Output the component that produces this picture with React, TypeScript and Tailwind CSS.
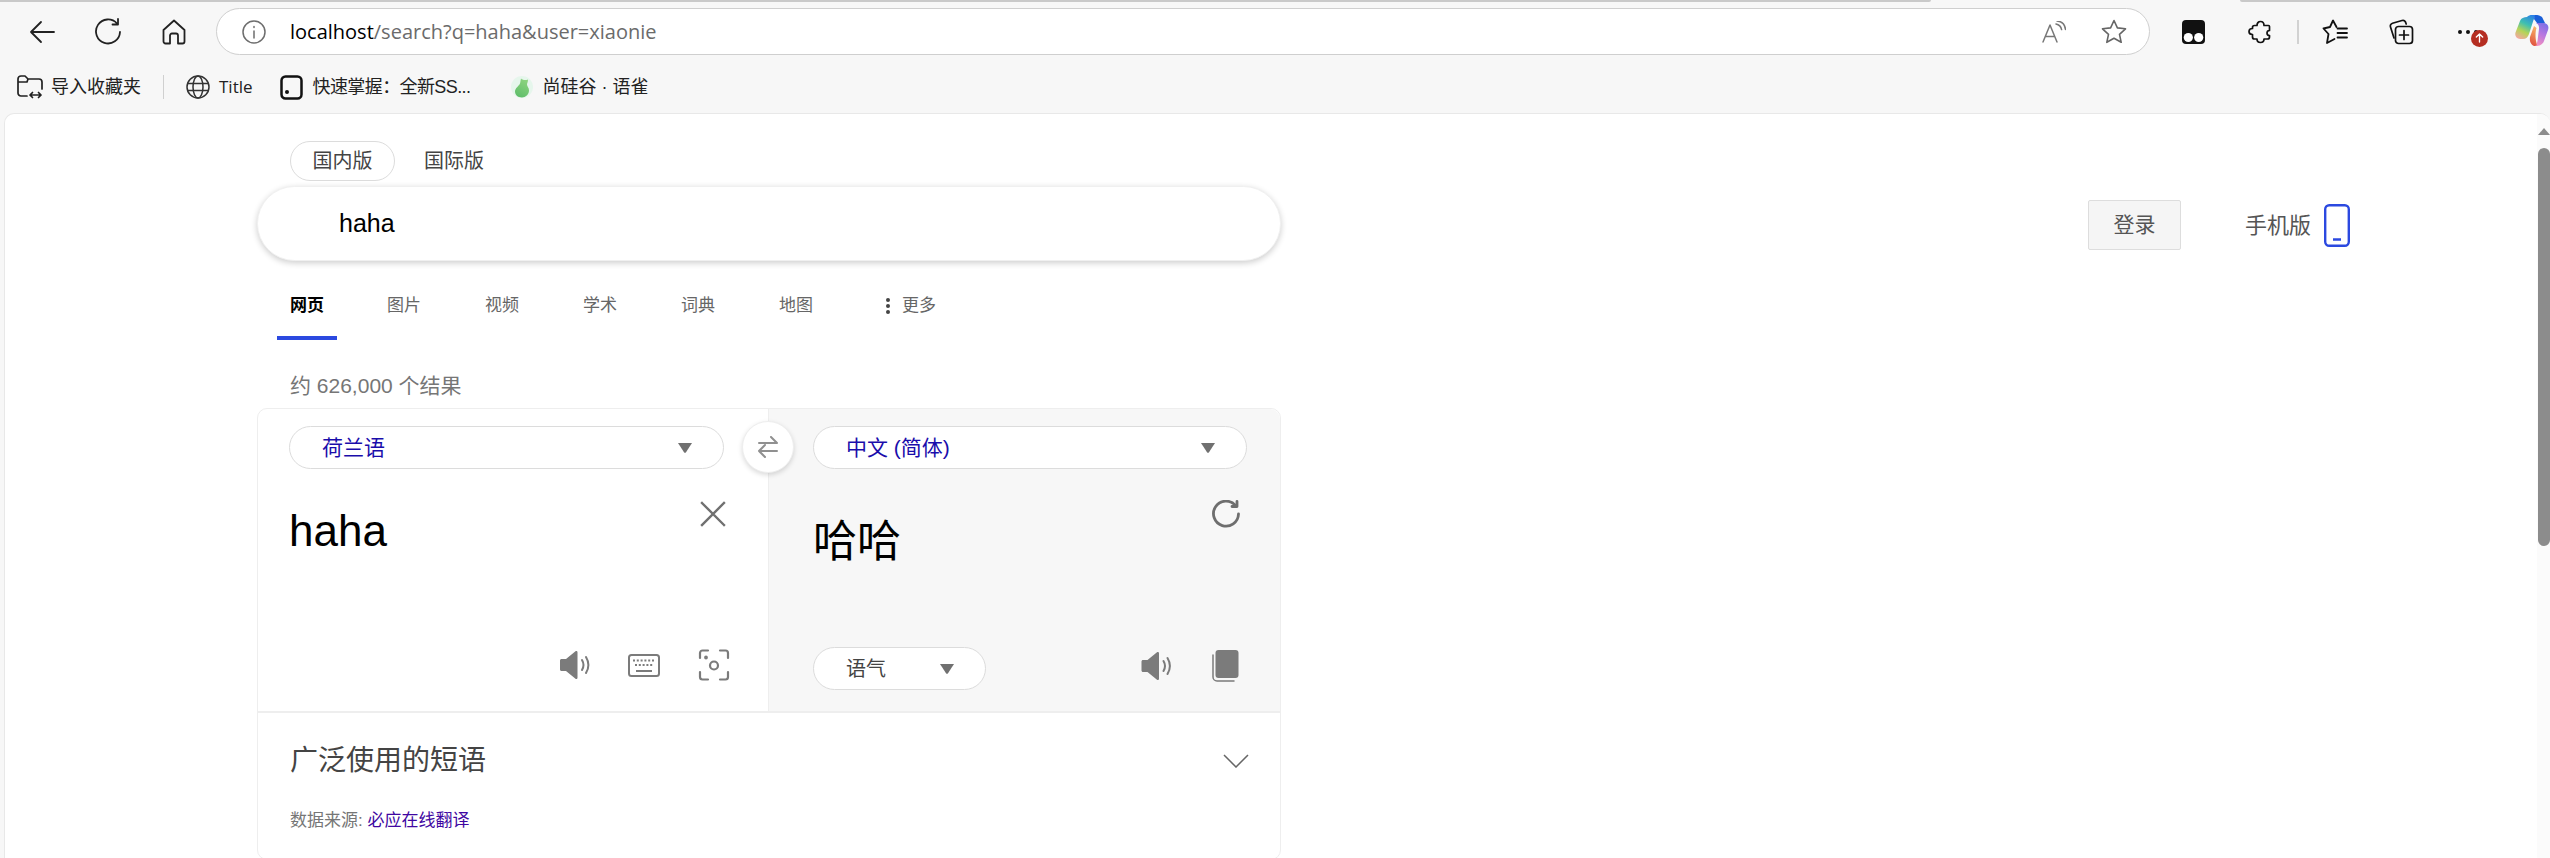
const cjk = "font-['Liberation_Sans','Noto_Sans_CJK_SC',sans-serif]"

const Speaker = ({ className }: { className: string }) => (
  <svg viewBox="0 0 32 30" className={className} fill="none">
    <path d="M1 10.500c0-.8.7-1.500 1.500-1.500H7L16.500 1.200c.8-.6 2-.1 2 1v25.600c0 1.100-1.200 1.600-2 1L7 21H2.500C1.700 21 1 20.300 1 19.500z" fill="#7b7b7b" />
    <path d="M23 10c1.800 3 1.800 7 0 10M27 7c3 5 3 11 0 16" stroke="#7b7b7b" strokeWidth="2" strokeLinecap="round" />
  </svg>
)

const Caret = () => (
  <svg viewBox="0 0 14 10" className="w-[14px] h-[10px]">
    <path d="M0 0h14L8 9.200c-.5.700-1.500.700-2 0z" fill="#707070" />
  </svg>
)

const LangSelect = ({ label, className }: { label: string; className: string }) => (
  <div className={`flex items-center justify-between h-[43px] pl-[32px] pr-[31px] bg-white border border-[#dcdcdc] rounded-full ${className}`}>
    <span className="text-[21px] text-[#1a0dab]">{label}</span>
    <Caret />
  </div>
)

const tabs = ['图片', '视频', '学术', '词典', '地图']

const App = () => {
  return (
    <div className={`w-[2550px] h-[858px] overflow-hidden flex flex-col bg-[#f7f7f7] ${cjk}`}>
      {/* tab strip leftovers */}
      <div className="flex justify-between h-[2px] shrink-0">
        <div className="w-[1931px] bg-[#c9c9c9] rounded-br" />
        <div className="w-[310px] bg-[#c9c9c9] rounded-bl" />
      </div>

      {/* toolbar */}
      <div className="flex items-center h-[53px] mt-[3px] shrink-0">
        <svg viewBox="0 0 26 24" className="w-[26px] h-[24px] ml-[29px]" fill="none" stroke="#222" strokeWidth="1.800" strokeLinecap="round" strokeLinejoin="round">
          <path d="M25 12H2M12 2 2 12l10 10" />
        </svg>
        <svg viewBox="0 0 26 28" className="w-[26px] h-[28px] ml-[40px]" fill="none" stroke="#222" strokeWidth="1.800" strokeLinecap="round" strokeLinejoin="round">
          <path d="M22 5.500A12 12 0 1 0 25 14M23 1v5.500h-5.500" />
        </svg>
        <svg viewBox="0 0 24 26" className="w-[24px] h-[26px] ml-[41px]" fill="none" stroke="#222" strokeWidth="1.800" strokeLinejoin="round">
          <path d="M1.500 11 12 1.500 22.500 11v11.500a2 2 0 0 1-2 2H16v-8a2 2 0 0 0-2-2h-4a2 2 0 0 0-2 2v8H3.500a2 2 0 0 1-2-2z" />
        </svg>
        <div className="flex items-center w-[1934px] h-[47px] ml-[30px] bg-white border border-[#cfcfcf] rounded-full">
          <svg viewBox="0 0 24 24" className="w-[24px] h-[24px] ml-[25px]" fill="none" stroke="#6e6e6e" strokeWidth="1.500" strokeLinecap="round">
            <circle cx="12" cy="12" r="11" />
            <path d="M12 11v7M12 6.500v1" />
          </svg>
          <span className="ml-[24px] text-[20px] font-['Open_Sans',sans-serif]">
            <span className="text-black">localhost</span>
            <span className="text-[#6b6b6b]">/search?q=haha&amp;user=xiaonie</span>
          </span>
          <svg viewBox="0 0 24 22" className="w-[24px] h-[22px] ml-auto" fill="none" stroke="#777" strokeWidth="1.500" strokeLinecap="round" strokeLinejoin="round">
            <path d="M1 21 8 4l7 17M3.500 15.500h9M14 3c3 .6 5 2.600 5.600 5.600M15 0c5 .5 8 3.500 8.500 8.500" />
          </svg>
          <svg viewBox="0 0 26 25" className="w-[26px] h-[25px] ml-[35px] mr-[22px]" fill="none" stroke="#666" strokeWidth="1.600" strokeLinejoin="round">
            <path d="m13 1.500 3.400 7.400 8.100.9-6 5.500 1.700 8-7.200-4.100-7.200 4.100 1.700-8-6-5.500 8.100-.9z" />
          </svg>
        </div>
        {/* tampermonkey */}
        <svg viewBox="0 0 23 24" className="w-[23px] h-[24px] ml-[32px]">
          <rect width="23" height="24" rx="4" fill="#111" />
          <circle cx="6.300" cy="17.500" r="4.600" fill="#fff" />
          <circle cx="16.700" cy="17.500" r="4.600" fill="#fff" />
        </svg>
        <svg viewBox="0 0 24 24" className="w-[24px] h-[24px] ml-[43px]" fill="none" stroke="#111" strokeWidth="1.700" strokeLinejoin="round">
          <path d="M9 5.500C9 3 10.500 1.500 12.500 1.500S16 3 16 5.500h4.500a1 1 0 0 1 1 1v4c-1.500 0-2.500 1-2.500 2.500s1 2.500 2.500 2.500v1.500a2 2 0 0 1-2 2H16c0 2-1.500 3.500-3.500 3.500S9 21 9 19H6.500a2 2 0 0 1-2-2v-2.500C2.500 14.500 1 13.500 1 11.500S2.500 8.500 4.500 8.500V7.500a2 2 0 0 1 2-2z" />
        </svg>
        <div className="w-[2px] h-[24px] ml-[25px] bg-[#d2d2d2]" />
        <svg viewBox="0 0 26 26" className="w-[26px] h-[26px] ml-[23px]" fill="none" stroke="#111" strokeWidth="1.800" strokeLinejoin="round" strokeLinecap="round">
          <path d="M14.500 8 11 1.500 8 8l-6.500 1.500L6.500 15 5 24l7.500-4" />
          <path d="M15.500 9.500H25M15.500 14H25M15.500 18.500H25" />
        </svg>
        <svg viewBox="0 0 26 26" className="w-[26px] h-[26px] ml-[40px]" fill="none" stroke="#111" strokeWidth="1.700" strokeLinejoin="round" strokeLinecap="round">
          <path d="M6 19 2.500 8a3 3 0 0 1 2-3.800L14 1.500a3 3 0 0 1 3.500 1.500l.7 2" />
          <rect x="7.500" y="7.500" width="17" height="17" rx="3" />
          <path d="M16 11.500v9M11.500 16h9" />
        </svg>
        <div className="flex items-center gap-[4px] ml-[44px]">
          <div className="w-[4px] h-[4px] rounded-full bg-[#111]" />
          <div className="w-[4px] h-[4px] rounded-full bg-[#111]" />
          <div className="relative w-[4px] h-[4px] rounded-full bg-[#111]">
            <div className="absolute left-[-3px] top-[0px] flex items-center justify-center w-[17px] h-[17px] rounded-full bg-[#b52e22]">
              <svg viewBox="0 0 10 11" className="w-[9px] h-[10px]" fill="none" stroke="#fff" strokeWidth="1.500" strokeLinecap="round" strokeLinejoin="round">
                <path d="M5 10V1M1.500 4.500 5 1l3.500 3.500" />
              </svg>
            </div>
          </div>
        </div>
        {/* copilot */}
        <svg viewBox="0 0 34 32" className="w-[34px] h-[32px] ml-[37px] -translate-y-[1px]">
          <defs>
            <linearGradient id="cpA" x1="0.7" y1="0" x2="0.2" y2="1">
              <stop offset="0" stopColor="#2a7fe8" />
              <stop offset="0.4" stopColor="#3fc0b0" />
              <stop offset="0.7" stopColor="#b6d456" />
              <stop offset="1" stopColor="#f2a9a0" />
            </linearGradient>
            <linearGradient id="cpB" x1="0.7" y1="0" x2="0.4" y2="1">
              <stop offset="0" stopColor="#7a6fe6" />
              <stop offset="0.5" stopColor="#b878e0" />
              <stop offset="1" stopColor="#f08ec0" />
            </linearGradient>
            <linearGradient id="cpC" x1="0.6" y1="0" x2="0.4" y2="1">
              <stop offset="0" stopColor="#f7b267" />
              <stop offset="1" stopColor="#e0503f" />
            </linearGradient>
          </defs>
          <path d="M12 2c1.500-1.500 3-2 5-2h7c-3 0-4.500 2-5.500 5L14 19c-1 3-3 5-6 5H5c-3.500 0-5.500-3-4.500-6.500L5 6c1-3 4-4 7-4z" fill="url(#cpA)" />
          <path d="M20 0c4 0 7 1 8 4l2 4h-8l-3-4z" fill="#1a5fd8" />
          <path d="M20 8h8c4 0 6.500 3 5 7l-4 11c-1 3-4 5-7 5h-2c1.500-1 2-3 2.500-5l1.500-12c.4-3-1-6-4-6z" fill="url(#cpB)" />
          <path d="M19 11l-4 11c-.5 3 0 7 4 9 3 0 3-1 2.500-3-1.500-6-1-12 0-15z" fill="url(#cpC)" />
        </svg>
      </div>

      {/* bookmarks */}
      <div className="flex items-center h-[40px] mt-[9px] shrink-0 text-[18px] text-[#222]">
        <svg viewBox="0 0 26 24" className="w-[26px] h-[24px] ml-[17px]" fill="none" stroke="#222" strokeWidth="1.700" strokeLinecap="round" strokeLinejoin="round">
          <path d="M10 21H4a3 3 0 0 1-3-3V4a3 3 0 0 1 3-3h4l3 3h11a3 3 0 0 1 3 3v7M1 7h9l1-3" />
          <path d="M13 20h11M15.500 17.500 13 20l2.500 2.500M21.500 17.500 24 20l-2.500 2.500" />
        </svg>
        <span className="ml-[8px]">导入收藏夹</span>
        <div className="w-px h-[24px] ml-[22px] bg-[#d0d0d0]" />
        <svg viewBox="0 0 24 24" className="w-[24px] h-[24px] ml-[22px]" fill="none" stroke="#333" strokeWidth="1.500">
          <circle cx="12" cy="12" r="11" />
          <ellipse cx="12" cy="12" rx="5" ry="11" />
          <path d="M1.500 8.500h21M1.500 15.500h21" />
        </svg>
        <span className="ml-[9px] font-['Open_Sans',sans-serif] text-[17px]">Title</span>
        <svg viewBox="0 0 23 25" className="w-[23px] h-[25px] ml-[27px]" fill="none">
          <rect x="1.500" y="1.500" width="20" height="22" rx="4" stroke="#111" strokeWidth="2.500" />
          <circle cx="7" cy="17" r="2" fill="#111" />
        </svg>
        <span className="ml-[10px] w-[198px] tracking-[-0.6px]">快速掌握：全新SS...</span>
        <svg viewBox="0 0 22 24" className="w-[22px] h-[24px]">
          <defs>
            <linearGradient id="yq" x1="0.7" y1="0" x2="0.3" y2="1">
              <stop offset="0" stopColor="#8ed47f" />
              <stop offset="1" stopColor="#5fbd6a" />
            </linearGradient>
          </defs>
          <circle cx="11" cy="12" r="11" fill="#e6f6ec" />
          <path d="M10 3.500c1.500 1.500 4 2 7 1 0 2.500-1 3.500-1 5 0 2 2 3 2 6 0 4-3.500 7-7 7-4.500 0-7-3-7-6 0-3.500 4-5.500 5-8 .5-1.500.5-3.500 1-5z" fill="url(#yq)" />
        </svg>
        <span className="ml-[10px]">尚硅谷 · 语雀</span>
      </div>

      {/* page */}
      <main className="flex-1 flex ml-[4px] mt-[6px] min-h-0 bg-white border-t border-l border-[#e8e8e8] rounded-tl-[10px] rounded-tr-[10px] overflow-hidden">
        <div className="flex-1 flex items-start min-w-0">
          <div className="flex flex-col w-[1024px] ml-[252px] mt-[27px] shrink-0">
            <div className="flex items-center h-[40px] ml-[33px] text-[20px] text-[#444]">
              <div className="flex items-center justify-center w-[105px] h-[40px] border border-[#dcdcdc] rounded-full">国内版</div>
              <div className="ml-[29px]">国际版</div>
            </div>

            <div className="flex items-center h-[75px] mt-[5px] pl-[81px] bg-white rounded-full border border-[#f0f0f0] shadow-[0_2px_6px_rgba(0,0,0,0.2)]">
              <span className="text-[25px] text-black">haha</span>
            </div>

            <div className="flex items-center h-[40px] mt-[25px] ml-[32px] text-[17px] text-[#666]">
              <span className="relative w-[98px] ml-[1px] font-bold text-black">
                网页
                <span className="absolute left-[-13px] top-[43px] w-[60px] h-[4px] bg-[#2b49e0]" />
              </span>
              {tabs.map((tab) => (
                <span key={tab} className="w-[98px] -translate-x-[1px]">{tab}</span>
              ))}
              <span className="flex items-center ml-[8px] gap-[12px]">
                <svg viewBox="0 0 4 16" className="w-[4px] h-[16px]" fill="#444">
                  <circle cx="2" cy="2" r="2" />
                  <circle cx="2" cy="8" r="2" />
                  <circle cx="2" cy="14" r="2" />
                </svg>
                更多
              </span>
            </div>

            <div className="mt-[45px] ml-[33px] h-[30px] leading-[30px] text-[21px] text-[#767676]">约 626,000 个结果</div>

            <section className="relative flex flex-col mt-[7px] h-[452px] border border-[#eeeeee] rounded-[10px] overflow-visible">
              <div className="flex h-[304px] border-b-2 border-[#eeeeee]">
                <div className="flex flex-col w-[511px] pl-[31px] pr-[44px] pt-[17px] border-r border-[#eeeeee]">
                  <LangSelect label="荷兰语" className="w-[435px]" />
                  <div className="flex justify-between items-start mt-[28px]">
                    <span className="text-[44px] leading-[48px] text-black mt-[10px]">haha</span>
                    <svg viewBox="0 0 26 26" className="w-[26px] h-[26px] mt-[4px] -mr-[2px]" fill="none" stroke="#707070" strokeWidth="2.400" strokeLinecap="square">
                      <path d="m2 2 22 22M24 2 2 24" />
                    </svg>
                  </div>
                  <div className="flex justify-end items-center mt-[94px] -mr-[6px]">
                    <Speaker className="w-[32px] h-[30px]" />
                    <svg viewBox="0 0 32 23" className="w-[32px] h-[23px] ml-[37px]" fill="none">
                      <rect x="1" y="1" width="30" height="21" rx="2.500" stroke="#7b7b7b" strokeWidth="2" />
                      <path d="M5 6.500h22M7 11h18" stroke="#7b7b7b" strokeWidth="2.200" strokeDasharray="2 1.800" />
                      <path d="M8 17h16" stroke="#7b7b7b" strokeWidth="2" />
                    </svg>
                    <svg viewBox="0 0 32 32" className="w-[32px] h-[32px] ml-[38px]" fill="none" stroke="#7b7b7b" strokeWidth="2.200" strokeLinecap="round">
                      <path d="M2 9V4a2.500 2.500 0 0 1 2.500-2.500H10M22 1.500h5.500A2.500 2.500 0 0 1 30 4v5M30 23v5a2.500 2.500 0 0 1-2.500 2.500H22M10 30.500H4.500A2.500 2.500 0 0 1 2 28v-5" />
                      <circle cx="16" cy="16.500" r="4" />
                      <circle cx="8" cy="8.500" r=".8" fill="#7b7b7b" />
                    </svg>
                  </div>
                </div>

                <div className="flex-1 flex flex-col pl-[44px] pr-[33px] pt-[17px] bg-[#f7f7f7] rounded-tr-[10px]">
                  <LangSelect label="中文 (简体)" className="w-[434px]" />
                  <div className="flex justify-between items-start mt-[27px]">
                    <span className="text-[44px] leading-[48px] text-black mt-[22px]">哈哈</span>
                    <svg viewBox="0 0 28 28" className="w-[28px] h-[28px] mr-[7px] mt-[4px]" fill="none" stroke="#6e6e6e" strokeWidth="2.800" strokeLinecap="round" strokeLinejoin="round">
                      <path d="M23.500 5.500A12.500 12.500 0 1 0 26.500 14" />
                      <path d="M25 1.500v5h-5" />
                    </svg>
                  </div>
                  <div className="flex items-center mt-[81px]">
                    <div className="flex items-center justify-between w-[173px] h-[43px] pl-[32px] pr-[31px] bg-white border border-[#dcdcdc] rounded-full text-[20px] text-[#444]">
                      <span>语气</span>
                      <Caret />
                    </div>
                    <Speaker className="w-[33px] h-[30px] ml-auto mb-[6px]" />
                    <svg viewBox="0 0 27 32" className="w-[27px] h-[32px] ml-[39px] mr-[8px] mb-[6px]" fill="none">
                      <path d="M1 5v22a4 4 0 0 0 4 4h17" stroke="#7b7b7b" strokeWidth="1.500" strokeLinecap="round" />
                      <rect x="3.500" y="0" width="23" height="28" rx="3" fill="#7b7b7b" />
                    </svg>
                  </div>
                </div>
              </div>

              {/* swap */}
              <div className="absolute left-[484px] top-[12px] flex items-center justify-center w-[52px] h-[52px] bg-white rounded-full border border-[#eeeeee] shadow-[0_2px_5px_rgba(0,0,0,0.15)]">
                <svg viewBox="0 0 20 22" className="w-[20px] h-[22px]" fill="none" stroke="#909090" strokeWidth="2" strokeLinecap="round" strokeLinejoin="round">
                  <path d="M1 7h18M13 1l6 6M19 15H1M7 9l-6 6 6 6" />
                </svg>
              </div>

              <div className="flex items-center justify-between h-[95px] px-[32px]">
                <span className="text-[28px] text-[#444]">广泛使用的短语</span>
                <svg viewBox="0 0 26 14" className="w-[26px] h-[14px] -mr-[1px]" fill="none" stroke="#666" strokeWidth="1.500">
                  <path d="m1 1 12 12L25 1" />
                </svg>
              </div>
              <div className="ml-[32px] text-[17px] text-[#767676]">
                数据来源: <a className="text-[#4007a2]">必应在线翻译</a>
              </div>
            </section>
          </div>

          <div className="flex items-center ml-[807px] mt-[86px] shrink-0">
            <div className="flex items-center justify-center w-[93px] h-[50px] bg-[#f5f5f5] border border-[#dddddd] rounded-[2px] text-[21px] text-[#555]">登录</div>
            <span className="ml-[64px] text-[22px] text-[#555]">手机版</span>
            <svg viewBox="0 0 26 43" className="w-[26px] h-[43px] ml-[13px]" fill="none" stroke="#2b49e0" strokeWidth="2.400">
              <rect x="1.200" y="1.200" width="23.600" height="40.600" rx="4" />
              <path d="M9 35.500h8" />
            </svg>
          </div>
        </div>

        {/* scrollbar */}
        <div className="flex flex-col items-center w-[13px] shrink-0 bg-[#fbfbfb]">
          <div className="mt-[14px] w-0 h-0 border-x-[6px] border-x-transparent border-b-[7px] border-b-[#8c8c8c]" />
          <div className="mt-[13px] w-[12px] h-[398px] rounded-full bg-[#8c8c8c]" />
        </div>
      </main>
    </div>
  )
}

export default App
